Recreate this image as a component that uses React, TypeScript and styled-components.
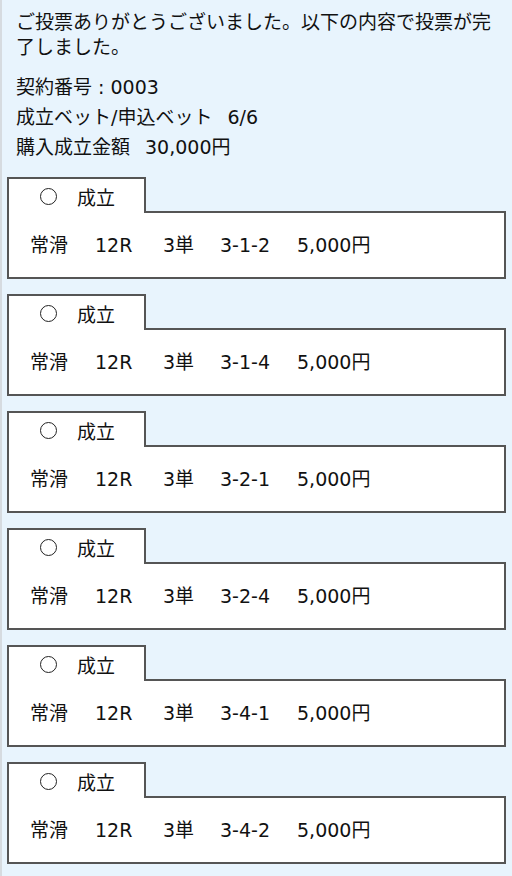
import React from 'react';
import styled, { createGlobalStyle } from 'styled-components';

const GlobalStyle = createGlobalStyle`
  html, body {
    margin: 0;
    padding: 0;
    background: #e8f4fd;
  }
  body {
    font-family: "DejaVu Sans", "Noto Sans CJK JP", sans-serif;
    color: #111;
  }
`;

const Page = styled.div`
  min-height: 100vh;
  box-sizing: border-box;
  border-left: 2px solid #d6dbe0;
  padding: 10px 6px 12px 5px;
`;

const Message = styled.p`
  margin: 0 0 12px 9px;
  font-size: 19px;
  line-height: 25px;
`;

const Summary = styled.div`
  margin: 0 0 15px 9px;
  font-size: 19px;
  line-height: 30px;
`;

const Value = styled.span`
  margin-left: 15px;
`;

const Card = styled.section`
  margin-bottom: 15px;
`;

const Tab = styled.div`
  position: relative;
  z-index: 1;
  width: 139px;
  height: 36px;
  box-sizing: border-box;
  margin-bottom: -2px;
  border: 2px solid #555;
  border-bottom: none;
  background: #fff;
  display: flex;
  align-items: center;
  padding-left: 31px;
  gap: 20px;
  font-size: 19px;
`;

const Mark = styled.span`
  display: inline-block;
  box-sizing: border-box;
  width: 17px;
  height: 17px;
  border: 1.5px solid #222;
  border-radius: 50%;
`;

const Body = styled.div`
  height: 64px;
  border: 2px solid #555;
  background: #fff;
  display: grid;
  grid-template-columns: 65px 68px 57px 77px auto;
  align-content: center;
  align-items: baseline;
  padding-left: 21px;
  font-size: 19px;
  line-height: 28px;
`;

const bets = ['3-1-2', '3-1-4', '3-2-1', '3-2-4', '3-4-1', '3-4-2'];

export default function App() {
  return (
    <>
      <GlobalStyle />
      <Page>
        <Message>ご投票ありがとうございました。以下の内容で投票が完了しました。</Message>
        <Summary>
          <div>契約番号 : 0003</div>
          <div>成立ベット/申込ベット<Value>6/6</Value></div>
          <div>購入成立金額<Value>30,000円</Value></div>
        </Summary>
        {bets.map((b) => (
          <Card key={b}>
            <Tab>
              <Mark />
              <span>成立</span>
            </Tab>
            <Body>
              <span>常滑</span>
              <span>12R</span>
              <span>3単</span>
              <span>{b}</span>
              <span>5,000円</span>
            </Body>
          </Card>
        ))}
      </Page>
    </>
  );
}
